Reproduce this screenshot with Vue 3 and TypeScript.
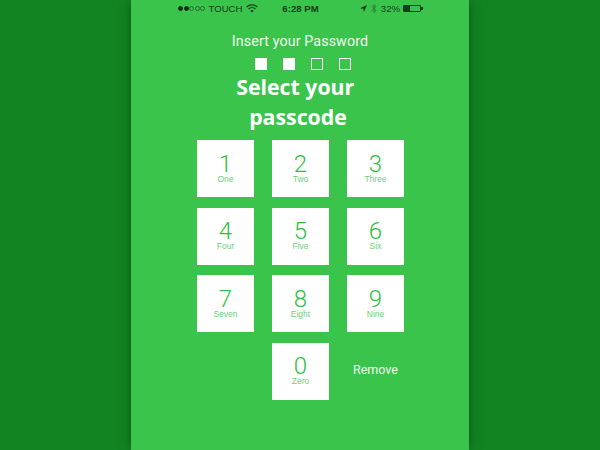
<script setup lang="ts">
const keys = [
  { n: '1', w: 'One' }, { n: '2', w: 'Two' }, { n: '3', w: 'Three' },
  { n: '4', w: 'Four' }, { n: '5', w: 'Five' }, { n: '6', w: 'Six' },
  { n: '7', w: 'Seven' }, { n: '8', w: 'Eight' }, { n: '9', w: 'Nine' },
]
const dots = [true, true, false, false]
const signal = [true, true, false, false, false]
</script>

<template>
  <div class="page">
    <main class="phone">
      <header class="status">
        <div class="left">
          <span class="signal">
            <i v-for="(s, i) in signal" :key="i" :class="['sig', { on: s }]"></i>
          </span>
          <span class="carrier">TOUCH</span>
          <svg class="wifi" width="12" height="9" viewBox="0 0 12 9">
            <path d="M.6 3A7.8 7.8 0 0 1 11.4 3" fill="none" stroke="#143d1c" stroke-width="1.3"/>
            <path d="M2.6 5A5 5 0 0 1 9.400 5" fill="none" stroke="#143d1c" stroke-width="1.3"/>
            <path d="M4.300 6.700A2.500 2.500 0 0 1 7.700 6.700L6 8.600Z" fill="#143d1c"/>
          </svg>
        </div>
        <span class="time">6:28 PM</span>
        <div class="right">
          <svg class="arrow" width="7" height="7" viewBox="0 0 8 8"><path d="M8 0 0 3.600 3.800 4.200 4.400 8Z" fill="#143d1c"/></svg>
          <svg class="bt" width="6" height="11" viewBox="0 0 6 11"><path d="M.5 3 5 7.400 3 9.500V1.500L5 3.600.5 8" fill="none" stroke="#2b7438" stroke-width=".9"/></svg>
          <span class="pct">32%</span>
          <span class="battery"><span class="charge"></span></span>
        </div>
      </header>

      <p class="prompt">Insert your Password</p>
      <div class="dots">
        <span v-for="(d, i) in dots" :key="i" :class="['dot', { filled: d }]"></span>
      </div>
      <h1 class="title">Select your&nbsp;<br />passcode</h1>

      <div class="pad">
        <button v-for="k in keys" :key="k.n" class="key" type="button">
          <span class="num">{{ k.n }}</span>
          <span class="word">{{ k.w }}</span>
        </button>
        <button class="key zero" type="button">
          <span class="num">0</span>
          <span class="word">Zero</span>
        </button>
        <button class="remove" type="button">Remove</button>
      </div>
    </main>
  </div>
</template>

<style>
html, body { margin: 0; padding: 0; }
</style>

<style scoped>
.page {
  width: 600px;
  height: 450px;
  overflow: hidden;
  background: #128422;
  display: flex;
  justify-content: center;
}
.phone {
  width: 338px;
  height: 450px;
  background: #3ac44c;
  box-shadow: 0 0 12px rgba(0, 40, 10, 0.45);
  display: flex;
  flex-direction: column;
  align-items: center;
  font-family: Roboto, "Liberation Sans", sans-serif;
}
.status {
  width: 245px;
  height: 16px;
  margin-left: 1px;
  display: grid;
  grid-template-columns: 1fr auto 1fr;
  align-items: center;
  color: #143d1c;
  font-family: "Liberation Sans", sans-serif;
  font-size: 9.6px;
}
.left, .right { display: flex; align-items: center; }
.right { justify-content: flex-end; padding-right: 2px; }
.signal { display: flex; gap: 0.5px; }
.sig {
  width: 5px;
  height: 5px;
  box-sizing: border-box;
  border: 0.6px solid #2a6a36;
  border-radius: 50%;
}
.sig.on { background: #10301a; border-color: #10301a; }
.carrier { margin-left: 3.5px; }
.wifi { margin-left: 4px; }
.time { font-weight: 700; }
.bt { margin-left: 4px; }
.pct { margin-left: 4px; }
.battery {
  margin-left: 3px;
  width: 18px;
  height: 7px;
  box-sizing: border-box;
  border: 0.7px solid #143d1c;
  border-radius: 1px;
  position: relative;
}
.battery::after {
  content: "";
  position: absolute;
  right: -2.500px;
  top: 1.500px;
  width: 1.200px;
  height: 2.600px;
  background: #143d1c;
}
.charge { display: block; width: 5.500px; height: 100%; background: #143d1c; }
.prompt {
  margin: 17px 0 0;
  font-size: 14.300px;
  line-height: 16px;
  font-weight: 400;
  color: #eefaf0;
  letter-spacing: 0.100px;
}
.dots { display: flex; gap: 16px; margin: 9px 0 0 6px; }
.dot {
  width: 12px;
  height: 12px;
  box-sizing: border-box;
  border: 1px solid #fff;
}
.dot.filled { background: #fff; }
.title {
  margin: 2px 0 0;
  padding-right: 4px;
  font-family: "Open Sans", sans-serif;
  font-size: 21.300px;
  line-height: 29.500px;
  font-weight: 700;
  color: #fff;
  text-align: center;
}
.pad {
  margin: 9px 0 0 1px;
  display: grid;
  grid-template-columns: repeat(3, 57.500px);
  grid-auto-rows: 57px;
  column-gap: 17.500px;
  row-gap: 10.500px;
}
.key {
  padding: 0;
  border: 0;
  background: #fff;
  color: #2fc042;
  display: flex;
  flex-direction: column;
  align-items: center;
  justify-content: flex-start;
  font-family: inherit;
}
.num {
  margin-top: 12.500px;
  font-size: 24px;
  line-height: 22px;
  font-weight: 300;
}
.word {
  font-family: "Liberation Sans", sans-serif;
  font-size: 8.500px;
  line-height: 9px;
  color: #6bd276;
}
.zero { grid-column: 2; }
.remove {
  padding: 0 0 4px;
  border: 0;
  background: none;
  color: #eefaf0;
  font-family: inherit;
  font-size: 12.500px;
  font-weight: 400;
}
</style>
